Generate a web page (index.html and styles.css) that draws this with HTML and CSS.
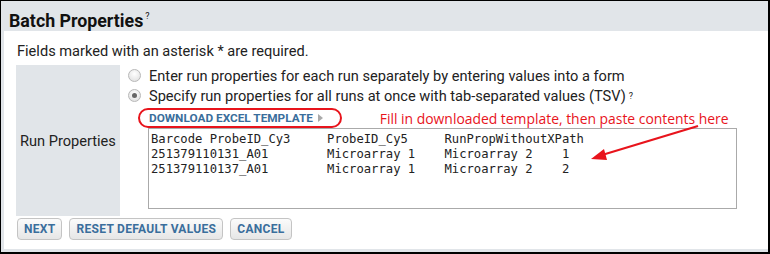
FILE: index.html
```html
<!DOCTYPE html>
<html lang="en">
<head>
    <meta charset="UTF-8">
    <title>Batch Properties</title>
    <link rel="stylesheet" href="styles.css">
</head>
<body>
    <div class="panel">
        <div class="panel-title">Batch Properties<sup>?</sup></div>
        <div class="panel-body">
            <p class="note">Fields marked with an asterisk * are required.</p>
            <div class="form-row">
                <div class="label-cell">Run Properties</div>
                <div class="input-cell">
                    <label class="radio"><span class="radio-dot"></span>Enter run properties for each run separately by entering values into a form</label>
                    <label class="radio"><span class="radio-dot checked"></span>Specify run properties for all runs at once with tab-separated values (TSV)<sup>?</sup></label>
                    <div class="template-row">
                        <a class="template-link">DOWNLOAD EXCEL TEMPLATE <span class="tri"></span></a>
                        <span class="hint">Fill in downloaded template, then paste contents here</span>
                    </div>
                    <textarea class="tsv">Barcode ProbeID_Cy3     ProbeID_Cy5     RunPropWithoutXPath
251379110131_A01        Microarray 1    Microarray 2    1
251379110137_A01        Microarray 1    Microarray 2    2
</textarea>
                </div>
            </div>
            <div class="buttons">
                <button class="btn">NEXT</button>
                <button class="btn">RESET DEFAULT VALUES</button>
                <button class="btn">CANCEL</button>
            </div>
        </div>
    </div>
    <svg class="arrow" width="770" height="254" viewBox="0 0 770 254">
        <line x1="698" y1="126" x2="602" y2="155" stroke="#e8141c" stroke-width="2.2"/>
        <polygon points="591,159 604,149 607,160" fill="#e8141c"/>
    </svg>
</body>
</html>
```

FILE: styles.css
```css
body {
    margin: 0;
    font-family: Roboto, "Liberation Sans", sans-serif;
    color: #222;
    position: relative;
}
.panel {
    width: 770px;
    height: 254px;
    box-sizing: border-box;
    border: 1px solid #000;
    border-right-width: 2px;
    border-bottom-width: 2px;
    background: #e1e5e9;
    display: flex;
    flex-direction: column;
}
.panel-title {
    height: 30px;
    padding-left: 8px;
    font-size: 17.8px;
    font-weight: bold;
    line-height: 31px;
    color: #111;
}
.panel-title sup { font-size: 9px; font-weight: normal; vertical-align: 8px; margin-left: 2px; }
.panel-body {
    flex: 1;
    margin: 0 0 3px 3px;
    background: #fff;
    padding: 0 0 0 13px;
}
.note {
    margin: 10px 0 0;
    font-size: 14.6px;
    line-height: 20px;
}
.form-row {
    display: flex;
    margin-top: 4px;
}
.label-cell {
    width: 104px;
    margin-left: -1px;
    background: #e1e5e9;
    font-size: 14.6px;
    display: flex;
    align-items: center;
    padding-left: 4px;
    box-sizing: border-box;
    height: 151px;
}
.input-cell {
    padding-left: 8px;
    padding-top: 1px;
}
.radio {
    display: flex;
    align-items: center;
    height: 20px;
    font-size: 14.6px;
}
.radio sup { font-size: 9px; vertical-align: 7px; margin-left: 3px; }
.radio-dot {
    width: 11px;
    height: 11px;
    border-radius: 50%;
    border: 1px solid #b8b8b8;
    background: radial-gradient(circle at 50% 35%, #fff, #dcdcdc);
    margin-right: 8px;
    margin-top: -1px;
    position: relative;
}
.radio-dot.checked::after {
    content: "";
    position: absolute;
    left: 3px;
    top: 3px;
    width: 5px;
    height: 5px;
    border-radius: 50%;
    background: #666;
}
.template-row {
    display: flex;
    align-items: center;
    height: 20px;
    margin-left: 20px;
    margin-top: 2px;
}
.template-link {
    font-size: 11.8px;
    font-weight: bold;
    color: #3a6e9c;
    border: 2px solid #e8141c;
    border-radius: 10px;
    padding: 0 17px 0 9px;
    margin-left: -10px;
    height: 16px;
    line-height: 16px;
}
.tri {
    display: inline-block;
    width: 0;
    height: 0;
    border-left: 5px solid #aaa;
    border-top: 4px solid transparent;
    border-bottom: 4px solid transparent;
    margin-left: 2px;
}
.hint {
    color: #e8141c;
    font-family: "Open Sans", sans-serif;
    font-size: 13.9px;
    margin-left: 38px;
}
.tsv {
    display: block;
    width: 589px;
    height: 81px;
    box-sizing: border-box;
    margin: 0 0 0 20px;
    border: 1px solid #aaa;
    padding: 3px 2px;
    font-family: "DejaVu Sans Mono", monospace;
    font-size: 12.2px;
    line-height: 15px;
    color: #222;
    resize: none;
    overflow: hidden;
}
.buttons {
    display: flex;
    gap: 7px;
    margin-top: 2px;
}
.btn {
    height: 22px;
    padding: 0 6px;
    border: 1px solid #c4c4c4;
    border-radius: 4px;
    background: linear-gradient(#fbfbfb, #e6e6e6);
    color: #3a6e9c;
    font-family: Roboto, "Liberation Sans", sans-serif;
    font-size: 12px;
    font-weight: bold;
    letter-spacing: 0.3px;
}
.arrow {
    position: absolute;
    left: 0;
    top: 0;
    pointer-events: none;
}
```
